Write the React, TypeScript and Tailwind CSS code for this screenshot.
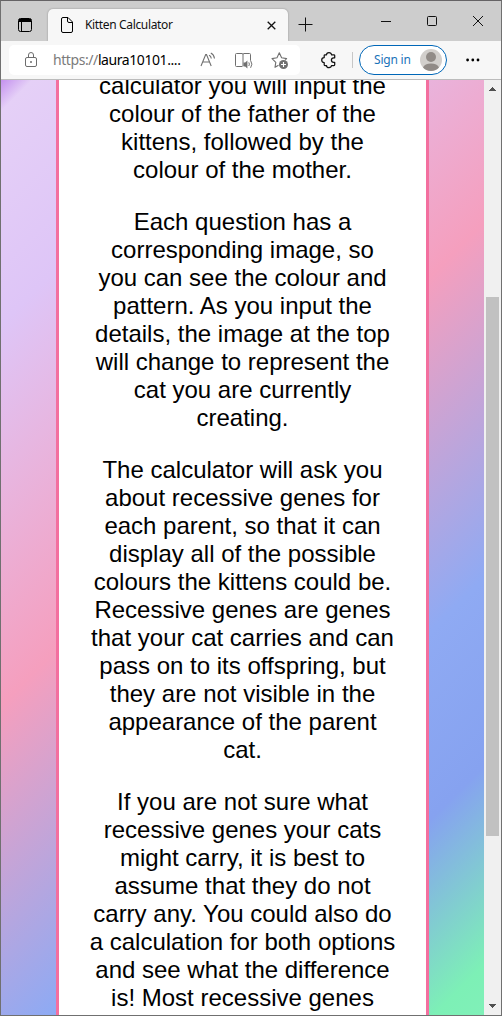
import React from "react";

const paragraphs: string[][] = [
  ["calculator you will input the", "colour of the father of the", "kittens, followed by the", "colour of the mother."],
  ["Each question has a", "corresponding image, so", "you can see the colour and", "pattern. As you input the", "details, the image at the top", "will change to represent the", "cat you are currently", "creating."],
  ["The calculator will ask you", "about recessive genes for", "each parent, so that it can", "display all of the possible", "colours the kittens could be.", "Recessive genes are genes", "that your cat carries and can", "pass on to its offspring, but", "they are not visible in the", "appearance of the parent", "cat."],
  ["If you are not sure what", "recessive genes your cats", "might carry, it is best to", "assume that they do not", "carry any. You could also do", "a calculation for both options", "and see what the difference", "is! Most recessive genes"],
];

function TitleBar() {
  return (
    <header className="flex h-10 shrink-0 bg-[#cdcdcd]">
      <div className="flex w-[47px] pt-[17px] pl-[17px]">
        <svg width="14" height="14" viewBox="0 0 14 14" fill="none" stroke="#000">
          <rect x=".5" y=".5" width="13" height="13" rx="2" />
          <path d="M1 1.5h12M1 2.5h12M1 3.5h12M3.5 4v9" />
        </svg>
      </div>
      <div className="mt-2 flex h-8 w-[240px] rounded-t-[5px] bg-[#f7f7f7] shadow-[0_0_2px_#888] [clip-path:inset(-3px_-3px_0_-3px)]">
        <svg className="mt-2 ml-[13px] shrink-0" width="12" height="16" viewBox="0 0 12 16" fill="none" stroke="#000" strokeLinejoin="round">
          <path d="M2 .5h5l4.5 4.5v9a1.5 1.5 0 0 1-1.5 1.5H2A1.5 1.5 0 0 1 .5 14V2A1.5 1.5 0 0 1 2 .5ZM6.5.5V4A1.5 1.5 0 0 0 8 5.5h3.5" />
        </svg>
        <span className="mt-2 ml-3 w-[180px] text-[12px] leading-4 tracking-[-0.35px] whitespace-nowrap text-[#111]">Kitten Calculator</span>
        <svg className="mt-3 mr-[12px] ml-[2px] shrink-0" width="9" height="9" viewBox="0 0 9 9" stroke="#111" strokeWidth="1.3">
          <path d="m.7.7 7.6 7.6M8.3.7.7 8.3" />
        </svg>
      </div>
      <svg className="mt-4 ml-[10px] shrink-0" width="15" height="15" viewBox="0 0 15 15" stroke="#111">
        <path d="M7.5.5v14M.5 7.5h14" />
      </svg>
      <div className="mr-[18px] ml-auto flex pt-[15px]">
        <svg className="mr-9" width="10" height="11" viewBox="0 0 10 11" stroke="#111"><path d="M0 5.5h10" /></svg>
        <svg className="mr-9" width="10" height="11" viewBox="0 0 10 11" fill="none" stroke="#111"><rect x=".5" y=".5" width="9" height="9" rx="1" /></svg>
        <svg width="10" height="11" viewBox="0 0 10 11" stroke="#111"><path d="m0 0 10 10M10 0 0 10" /></svg>
      </div>
    </header>
  );
}

function Toolbar() {
  return (
    <div className="flex h-[39px] shrink-0 border-b border-[#bcbcbc] bg-[#f7f7f7]">
      <div className="mt-1 ml-2 flex h-[30px] w-[291px] shrink-0 rounded-[5px] bg-white">
        <svg className="mt-[7px] ml-4 shrink-0" width="12" height="16" viewBox="0 0 12 16" fill="none" stroke="#6d6d6d">
          <rect x=".5" y="5.5" width="11" height="9" rx="1.5" />
          <path d="M3.5 5.5V3a2.5 2.5 0 0 1 5 0v2.5" />
          <circle cx="6" cy="10" r="1" fill="#6d6d6d" stroke="none" />
        </svg>
        <span className="mt-[5px] ml-4 w-[146px] text-[14px] leading-5 tracking-[-0.42px] whitespace-nowrap text-black">
          <span className="text-[#7b7b7b]">https://</span>laura10101....
        </span>
        <svg className="mt-[7px] ml-[1px] shrink-0" width="17" height="16" viewBox="0 0 17 16" fill="none" stroke="#707070" strokeWidth="1.1">
          <path d="m1 14 4.7-11.5h.8L11.2 14M2.7 10h6.8M9 3.3q2 .7 2.3 3.2M10.8 1q3.2 1.5 3.7 5.5" />
        </svg>
        <svg className="mt-2 ml-[18px] shrink-0" width="18" height="16" viewBox="0 0 18 16" fill="none" stroke="#707070">
          <path d="M7.5 13.5h-6a1 1 0 0 1-1-1v-11a1 1 0 0 1 1-1H7a1 1 0 0 1 1 1V13M8 1.5a1 1 0 0 1 1-1h5.5a1 1 0 0 1 1 1v6M13.8 9.4q1.2 1.7 0 3.6M15.6 7.5q2.6 3.7 0 7.3" />
          <path d="M8.5 9.5h1.7l2.2-2v8l-2.2-2H8.5z" fill="#707070" stroke="none" />
        </svg>
        <svg className="mt-[7px] ml-[18px] shrink-0" width="18" height="18" viewBox="0 0 18 18" fill="none" stroke="#707070" strokeWidth="1.1" strokeLinejoin="round">
          <path d="M7.5 13.2 4 15.3l.8-5L1 6.6l5-.8L8.3.8l2.3 5 5 .8-1.5 1.5" />
          <circle cx="12.5" cy="12.5" r="4.5" fill="#707070" stroke="none" />
          <path d="M12.5 10v5M10 12.5h5" stroke="#fff" />
        </svg>
      </div>
      <svg className="mt-[10px] ml-[21px] shrink-0" width="16" height="18" viewBox="0 0 16 18" fill="none" stroke="#111" strokeWidth="1.25" strokeLinejoin="round">
        <path d="M5.5 3.8a2.5 2.3 0 0 1 5 0h2.4q.8 0 .8.8v2.2h-1a2.1 2.1 0 0 0 0 4.6h1v2.3q0 .8-.8.8h-2.4a2.5 2.2 0 0 1-5 0H4q-.8 0-.8-.8v-2.1a2.5 2.5 0 0 1 0-5V4.6q0-.8.8-.8z" />
      </svg>
      <div className="mt-[11px] ml-[15px] h-4 w-px shrink-0 bg-[#c7c7c7]" />
      <div className="mt-1 ml-[6px] flex h-[30px] w-[88px] shrink-0 rounded-full border border-[#0067b8] bg-white">
        <span className="mt-[5px] ml-[14px] w-[46px] text-[12px] leading-[18px] tracking-[-0.2px] whitespace-nowrap text-[#1a73b9]">Sign in</span>
        <svg className="mt-[3px] shrink-0" width="22" height="22" viewBox="0 0 22 22">
          <circle cx="11" cy="11" r="11" fill="#d2cfcc" />
          <circle cx="11" cy="8" r="5" fill="#918b87" />
          <path d="M3 18.5c1-2.8 4-4 8-4s7 1.2 8 4c-2 2.3-4.7 3.5-8 3.5s-6-1.2-8-3.5Z" fill="#918b87" />
        </svg>
      </div>
      <svg className="mt-[17px] ml-[19px] shrink-0" width="14" height="4" viewBox="0 0 14 4"><circle cx="1.6" cy="2" r="1.4" /><circle cx="6.8" cy="2" r="1.4" /><circle cx="12" cy="2" r="1.4" /></svg>
    </div>
  );
}

function Scrollbar() {
  return (
    <div className="flex w-[17px] shrink-0 flex-col items-center bg-[#f0f0f0]">
      <svg className="mt-[7px] shrink-0" width="7" height="4" viewBox="0 0 7 4" fill="#505050" shapeRendering="crispEdges"><path d="M3 0h1v1h1v1h1v1h1v1H0V3h1V2h1V1h1z" /></svg>
      <div className="mt-[206px] h-[539px] w-[13px] shrink-0 bg-[#c1c1c1]" />
      <svg className="mt-auto mb-[7px] shrink-0" width="7" height="4" viewBox="0 0 7 4" fill="#505050" shapeRendering="crispEdges"><path d="M0 0h7v1H6v1H5v1H4v1H3V3H2V2H1V1H0z" /></svg>
    </div>
  );
}

export default function App() {
  return (
    <div className="flex h-[1016px] w-[502px] flex-col overflow-hidden border border-[#707070] border-t-[#656365] bg-white font-['Noto_Sans',sans-serif]">
      <TitleBar />
      <Toolbar />
      <div className="flex min-h-0 flex-1">
        <main className="flex w-[483px] justify-center overflow-hidden bg-[linear-gradient(135deg,#c491ee_0%,#e5d0f7_2.2%,#dec5f7_17.3%,#f59fbe_44.1%,#8faaf3_69.2%,#86a2f0_82.4%,#7df0b6_96.5%,#80f0b8_100%)]">
          <article className="w-[373px] shrink-0 border-x-[3px] border-[#f36f9f] bg-white text-center font-['Liberation_Sans',Arial,sans-serif] text-[24px] leading-7 text-black">
            <div className="-mt-2 flex flex-col gap-6">
              {paragraphs.map((lines, i) => (
                <p key={i}>
                  {lines.map((line, j) => (
                    <span key={j} className="block whitespace-nowrap">{line}</span>
                  ))}
                </p>
              ))}
            </div>
          </article>
        </main>
        <Scrollbar />
      </div>
    </div>
  );
}
